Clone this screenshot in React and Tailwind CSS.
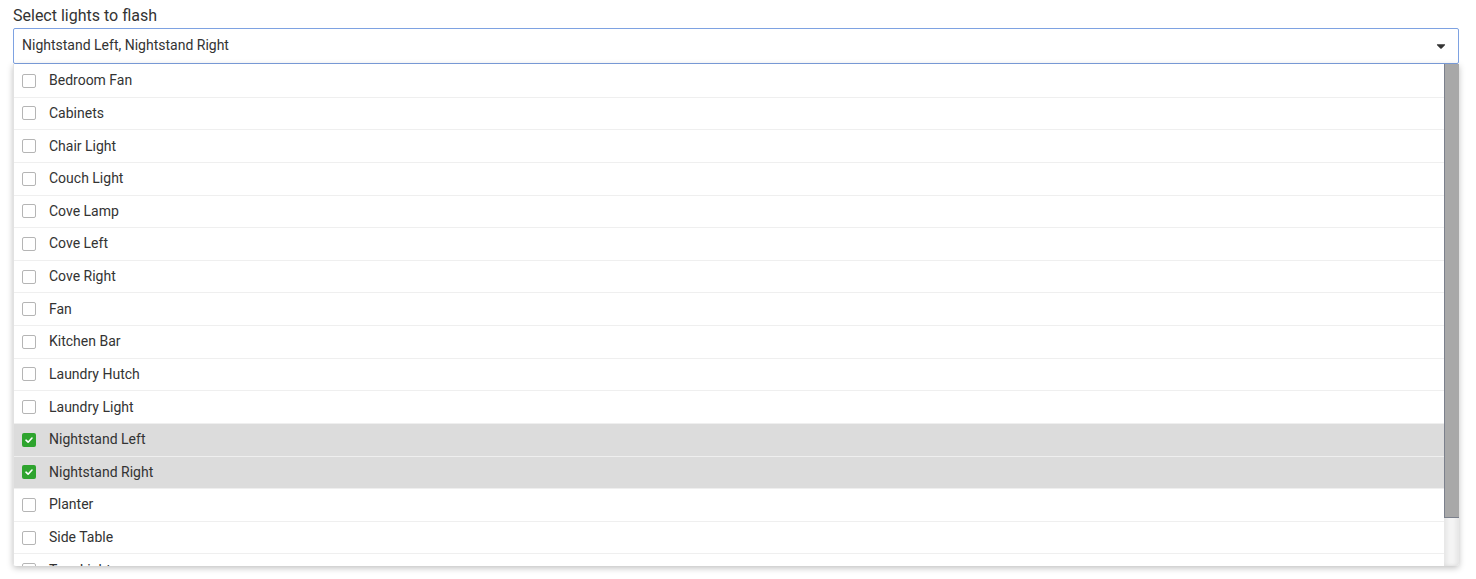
import { FaCaretDown } from "react-icons/fa";

const lights = [
  "Bedroom Fan",
  "Cabinets",
  "Chair Light",
  "Couch Light",
  "Cove Lamp",
  "Cove Left",
  "Cove Right",
  "Fan",
  "Kitchen Bar",
  "Laundry Hutch",
  "Laundry Light",
  "Nightstand Left",
  "Nightstand Right",
  "Planter",
  "Side Table",
  "Tree Light",
];

const selected = ["Nightstand Left", "Nightstand Right"];

const Check = ({ on }) =>
  on ? (
    <span className="w-[14px] h-[14px] rounded-[2px] bg-[#2ea42e] flex items-center justify-center">
      <svg width="10" height="10" viewBox="0 0 10 10">
        <path
          d="M2 5.2 L4.1 7.2 L8 3"
          fill="none"
          stroke="white"
          strokeWidth="1.6"
          strokeLinecap="round"
          strokeLinejoin="round"
        />
      </svg>
    </span>
  ) : (
    <span className="w-[14px] h-[14px] rounded-[2px] border border-[#b5b5b5] bg-white" />
  );

const App = () => {
  return (
    <div
      className="w-[1476px] h-[579px] bg-white px-[13px] pt-[6px] text-[#333]"
      style={{ fontFamily: "Roboto, 'Liberation Sans', sans-serif" }}
    >
      <div className="text-[16px] leading-[20px] mb-[2px]">Select lights to flash</div>
      <div className="w-[1446px] h-[36px] border border-[#7ea2e2] rounded-[2px] flex items-center justify-between pl-[8px] pr-[10px] pb-[1px]">
        <span className="text-[14px]">{selected.join(", ")}</span>
        <FaCaretDown className="text-[#333] w-[14px] h-[14px]" />
      </div>
      <div className="w-[1446px] h-[502px] flex overflow-hidden rounded-b-[3px] shadow-[0_2px_6px_rgba(0,0,0,0.25)] bg-white">
        <ul className="flex-1 flex flex-col overflow-hidden border-l border-[#e2e2e2] pt-[1px]">
          {lights.map((name) => {
            const on = selected.includes(name);
            return (
              <li
                key={name}
                className={`h-[32.64px] flex-shrink-0 flex items-center gap-[13px] pl-[8px] border-b border-[#efefef] text-[14px] ${
                  on ? "bg-[#dcdcdc]" : ""
                }`}
              >
                <Check on={on} />
                <span>{name}</span>
              </li>
            );
          })}
        </ul>
        <div className="w-[15px] flex flex-col bg-[#f4f4f4] shadow-[inset_3px_0_4px_rgba(0,0,0,0.06),inset_-3px_0_4px_rgba(0,0,0,0.06)]">
          <div className="h-[454px] bg-[#a8a8a8] border-l border-[#7b808c] border-b" />
        </div>
      </div>
    </div>
  );
};

export default App;
